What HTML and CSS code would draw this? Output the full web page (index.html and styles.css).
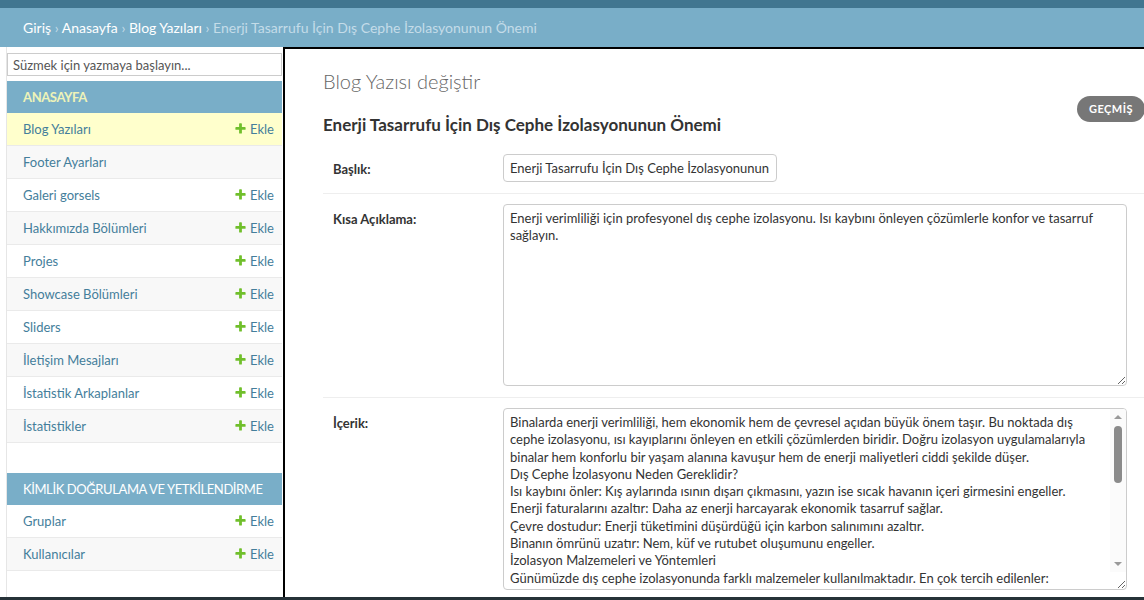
FILE: index.html
```html
<!DOCTYPE html>
<html lang="tr">
<head>
<meta charset="utf-8">
<title>Blog Yazısı değiştir</title>
<link rel="stylesheet" href="styles.css">
</head>
<body>
<div class="topbar"></div>
<nav class="breadcrumbs"><a href="#">Giriş</a> › <a href="#">Anasayfa</a> › <a href="#">Blog Yazıları</a> › Enerji Tasarrufu İçin Dış Cephe İzolasyonunun Önemi</nav>
<div class="main">
  <div class="toggle"></div>
  <aside class="sidebar">
    <input class="filter" type="search" placeholder="Süzmek için yazmaya başlayın...">
    <div class="module current-app">
      <div class="caption">Anasayfa</div>
      <div class="row current-model"><a href="#">Blog Yazıları</a><a class="add" href="#"><svg viewBox="0 0 1792 1792"><path d="M1600 796v192q0 40-28 68t-68 28h-416v416q0 40-28 68t-68 28h-192q-40 0-68-28t-28-68v-416h-416q-40 0-68-28t-28-68v-192q0-40 28-68t68-28h416v-416q0-40 28-68t68-28h192q40 0 68 28t28 68v416h416q40 0 68 28t28 68z"/></svg>Ekle</a></div>
      <div class="row"><a href="#">Footer Ayarları</a></div>
      <div class="row"><a href="#">Galeri gorsels</a><a class="add" href="#"><svg viewBox="0 0 1792 1792"><path d="M1600 796v192q0 40-28 68t-68 28h-416v416q0 40-28 68t-68 28h-192q-40 0-68-28t-28-68v-416h-416q-40 0-68-28t-28-68v-192q0-40 28-68t68-28h416v-416q0-40 28-68t68-28h192q40 0 68 28t28 68v416h416q40 0 68 28t28 68z"/></svg>Ekle</a></div>
      <div class="row"><a href="#">Hakkımızda Bölümleri</a><a class="add" href="#"><svg viewBox="0 0 1792 1792"><path d="M1600 796v192q0 40-28 68t-68 28h-416v416q0 40-28 68t-68 28h-192q-40 0-68-28t-28-68v-416h-416q-40 0-68-28t-28-68v-192q0-40 28-68t68-28h416v-416q0-40 28-68t68-28h192q40 0 68 28t28 68v416h416q40 0 68 28t28 68z"/></svg>Ekle</a></div>
      <div class="row"><a href="#">Projes</a><a class="add" href="#"><svg viewBox="0 0 1792 1792"><path d="M1600 796v192q0 40-28 68t-68 28h-416v416q0 40-28 68t-68 28h-192q-40 0-68-28t-28-68v-416h-416q-40 0-68-28t-28-68v-192q0-40 28-68t68-28h416v-416q0-40 28-68t68-28h192q40 0 68 28t28 68v416h416q40 0 68 28t28 68z"/></svg>Ekle</a></div>
      <div class="row"><a href="#">Showcase Bölümleri</a><a class="add" href="#"><svg viewBox="0 0 1792 1792"><path d="M1600 796v192q0 40-28 68t-68 28h-416v416q0 40-28 68t-68 28h-192q-40 0-68-28t-28-68v-416h-416q-40 0-68-28t-28-68v-192q0-40 28-68t68-28h416v-416q0-40 28-68t68-28h192q40 0 68 28t28 68v416h416q40 0 68 28t28 68z"/></svg>Ekle</a></div>
      <div class="row"><a href="#">Sliders</a><a class="add" href="#"><svg viewBox="0 0 1792 1792"><path d="M1600 796v192q0 40-28 68t-68 28h-416v416q0 40-28 68t-68 28h-192q-40 0-68-28t-28-68v-416h-416q-40 0-68-28t-28-68v-192q0-40 28-68t68-28h416v-416q0-40 28-68t68-28h192q40 0 68 28t28 68v416h416q40 0 68 28t28 68z"/></svg>Ekle</a></div>
      <div class="row"><a href="#">İletişim Mesajları</a><a class="add" href="#"><svg viewBox="0 0 1792 1792"><path d="M1600 796v192q0 40-28 68t-68 28h-416v416q0 40-28 68t-68 28h-192q-40 0-68-28t-28-68v-416h-416q-40 0-68-28t-28-68v-192q0-40 28-68t68-28h416v-416q0-40 28-68t68-28h192q40 0 68 28t28 68v416h416q40 0 68 28t28 68z"/></svg>Ekle</a></div>
      <div class="row"><a href="#">İstatistik Arkaplanlar</a><a class="add" href="#"><svg viewBox="0 0 1792 1792"><path d="M1600 796v192q0 40-28 68t-68 28h-416v416q0 40-28 68t-68 28h-192q-40 0-68-28t-28-68v-416h-416q-40 0-68-28t-28-68v-192q0-40 28-68t68-28h416v-416q0-40 28-68t68-28h192q40 0 68 28t28 68v416h416q40 0 68 28t28 68z"/></svg>Ekle</a></div>
      <div class="row"><a href="#">İstatistikler</a><a class="add" href="#"><svg viewBox="0 0 1792 1792"><path d="M1600 796v192q0 40-28 68t-68 28h-416v416q0 40-28 68t-68 28h-192q-40 0-68-28t-28-68v-416h-416q-40 0-68-28t-28-68v-192q0-40 28-68t68-28h416v-416q0-40 28-68t68-28h192q40 0 68 28t28 68v416h416q40 0 68 28t28 68z"/></svg>Ekle</a></div>
    </div>
    <div class="module">
      <div class="caption">Kimlik Doğrulama ve Yetkilendirme</div>
      <div class="row"><a href="#">Gruplar</a><a class="add" href="#"><svg viewBox="0 0 1792 1792"><path d="M1600 796v192q0 40-28 68t-68 28h-416v416q0 40-28 68t-68 28h-192q-40 0-68-28t-28-68v-416h-416q-40 0-68-28t-28-68v-192q0-40 28-68t68-28h416v-416q0-40 28-68t68-28h192q40 0 68 28t28 68v416h416q40 0 68 28t28 68z"/></svg>Ekle</a></div>
      <div class="row"><a href="#">Kullanıcılar</a><a class="add" href="#"><svg viewBox="0 0 1792 1792"><path d="M1600 796v192q0 40-28 68t-68 28h-416v416q0 40-28 68t-68 28h-192q-40 0-68-28t-28-68v-416h-416q-40 0-68-28t-28-68v-192q0-40 28-68t68-28h416v-416q0-40 28-68t68-28h192q40 0 68 28t28 68v416h416q40 0 68 28t28 68z"/></svg>Ekle</a></div>
    </div>
  </aside>
  <div class="content">
    <h1>Blog Yazısı değiştir</h1>
    <ul class="object-tools"><li><a href="#">Geçmiş</a></li></ul>
    <h2>Enerji Tasarrufu İçin Dış Cephe İzolasyonunun Önemi</h2>
    <form class="change-form">
      <div class="form-row">
        <label for="id_baslik">Başlık:</label>
        <input id="id_baslik" class="vTextField" type="text" value="Enerji Tasarrufu İçin Dış Cephe İzolasyonunun Önemi">
      </div>
      <div class="form-row">
        <label for="id_kisa">Kısa Açıklama:</label>
        <textarea id="id_kisa" class="vLargeTextField short">Enerji verimliliği için profesyonel dış cephe izolasyonu. Isı kaybını önleyen çözümlerle konfor ve tasarruf sağlayın.</textarea>
      </div>
      <div class="form-row">
        <label for="id_icerik">İçerik:</label>
        <div class="ta-wrap">
          <textarea id="id_icerik" class="vLargeTextField tall">Binalarda enerji verimliliği, hem ekonomik hem de çevresel açıdan büyük önem taşır. Bu noktada dış
cephe izolasyonu, ısı kayıplarını önleyen en etkili çözümlerden biridir. Doğru izolasyon uygulamalarıyla
binalar hem konforlu bir yaşam alanına kavuşur hem de enerji maliyetleri ciddi şekilde düşer.
Dış Cephe İzolasyonu Neden Gereklidir?
Isı kaybını önler: Kış aylarında ısının dışarı çıkmasını, yazın ise sıcak havanın içeri girmesini engeller.
Enerji faturalarını azaltır: Daha az enerji harcayarak ekonomik tasarruf sağlar.
Çevre dostudur: Enerji tüketimini düşürdüğü için karbon salınımını azaltır.
Binanın ömrünü uzatır: Nem, küf ve rutubet oluşumunu engeller.
İzolasyon Malzemeleri ve Yöntemleri
Günümüzde dış cephe izolasyonunda farklı malzemeler kullanılmaktadır. En çok tercih edilenler:
EPS Levhalar: Ekonomik ve hafif yapısıyla en yaygın kullanılan malzemedir.
XPS Levhalar: Neme karşı dayanıklıdır ve yüksek basınç mukavemetine sahiptir.
Taşyünü: Yanmaz yapısı sayesinde yangın güvenliği ve ses yalıtımı sağlar.
Cam Yünü: Hafif ve esnek yapısıyla farklı yüzeylere kolayca uygulanabilir.
Doğru Uygulamanın Önemi
İzolasyonun verimli olması için malzeme seçimi kadar uygulama kalitesi de önemlidir.
Sonuç
Dış cephe izolasyonu, hem bütçenize hem de çevreye katkı sağlayan uzun vadeli bir yatırımdır.</textarea>
          <div class="fake-scroll" aria-hidden="true">
            <span class="arrow-up"></span>
            <span class="thumb"></span>
            <span class="spacer"></span>
            <span class="arrow-down"></span>
          </div>
        </div>
      </div>
    </form>
  </div>
</div>
<div class="taskbar"></div>
</body>
</html>
```

FILE: styles.css
```css
* { box-sizing: border-box; }
html, body { margin: 0; padding: 0; }
body {
  width: 1144px;
  height: 600px;
  overflow: hidden;
  font-family: Lato, "Liberation Sans", sans-serif;
  font-size: 13px;
  color: #333;
  background: #fff;
}
a { text-decoration: none; color: #447e9b; }

.topbar { height: 8px; background: #417690; }

.breadcrumbs {
  height: 39px;
  padding: 10px 23px;
  background: #79aec8;
  color: #c4dce8;
  font-size: 14px;
  line-height: 19px;
  white-space: nowrap;
}
.breadcrumbs a { color: #fff; }

.main { display: flex; height: 553px; overflow: hidden; }

.toggle { flex: 0 0 7px; min-width: 0; border-right: 1px solid #e6e6e6; }

.sidebar {
  flex: 0 0 276px;
  min-width: 0;
  overflow: hidden;
  border-right: 1px solid #fff;
}
.filter {
  display: block;
  width: 100%;
  height: 23px;
  margin: 6px 0 5px;
  padding: 2px 5px;
  border: 1px solid #ccc;
  background: #fff;
  font: 13px Lato, "Liberation Sans", sans-serif;
  color: #333;
  outline: none;
}
.filter::placeholder { color: #555; }

.module { margin-bottom: 30px; }
.caption {
  height: 32px;
  padding: 0 16px;
  line-height: 32px;
  background: #79aec8;
  color: #fff;
  letter-spacing: -0.4px;
  text-transform: uppercase;
  white-space: nowrap;
}
.current-app .caption { color: #eef3b8; font-weight: bold; }

.row {
  display: flex;
  align-items: center;
  justify-content: space-between;
  height: 33px;
  padding: 0 8px 0 16px;
  border-bottom: 1px solid #eaeaea;
  background: #fff;
}
.row:nth-child(odd) { background: #f8f8f8; }
.row.current-model { background: #ffc; }
.add { display: flex; align-items: center; }
.add svg { width: 13px; height: 13px; fill: #70bf2b; margin-right: 3px; margin-top: -2px; }

.content {
  flex: 0 0 862px;
  min-width: 0;
  border-left: 2px solid #000;
  border-top: 2px solid #000;
  padding: 20px 0 0 38px;
}
h1 {
  margin: 0;
  font-size: 20px;
  line-height: 24px;
  font-weight: 300;
  color: #666;
}
.object-tools {
  float: right;
  margin: 3px 0 0;
  padding: 0;
  list-style: none;
}
.object-tools a {
  display: block;
  height: 26px;
  padding: 3px 12px;
  line-height: 20px;
  border-radius: 15px;
  background: #777;
  color: #fff;
  font-size: 11px;
  font-weight: bold;
  letter-spacing: 0.5px;
  text-transform: uppercase;
}
h2 {
  margin: 22px 0 9px;
  font-size: 17px;
  line-height: 20px;
  font-weight: bold;
  color: #333;
}
.change-form { clear: both; }
.form-row {
  display: flex;
  align-items: flex-start;
  padding: 10px 10px 11px;
  border-bottom: 1px solid #eee;
}
.form-row label {
  flex: 0 0 170px;
  padding-top: 7px;
  line-height: 16px;
  font-weight: bold;
  color: #333;
}
.vTextField {
  width: 274px;
  height: 28px;
  padding: 5px 6px;
  border: 1px solid #ccc;
  border-radius: 4px;
  font: 13px Lato, "Liberation Sans", sans-serif;
  color: #333;
}
.vLargeTextField {
  display: block;
  width: 624px;
  padding: 5px 6px;
  border: 1px solid #ccc;
  border-radius: 4px;
  font: 13px/17.3px Lato, "Liberation Sans", sans-serif;
  color: #333;
  resize: vertical;
}
.short { height: 182px; }

.ta-wrap { position: relative; }
.tall {
  height: 182px;
  padding-right: 22px;
  overflow: hidden;
  white-space: pre-wrap;
}
.fake-scroll {
  position: absolute;
  top: 1px;
  right: 1px;
  bottom: 18px;
  width: 16px;
  display: flex;
  flex-direction: column;
  align-items: center;
  background: #fbfbfb;
  border-top-right-radius: 3px;
}
.arrow-up, .arrow-down {
  flex: 0 0 auto;
  width: 0;
  height: 0;
  border-left: 4px solid transparent;
  border-right: 4px solid transparent;
}
.arrow-up { margin-top: 6px; border-bottom: 4px solid #9a9a9a; }
.arrow-down { margin-bottom: 6px; border-top: 4px solid #9a9a9a; }
.thumb {
  flex: 0 0 57px;
  width: 8px;
  margin-top: 7px;
  border-radius: 4px;
  background: #8b8b8b;
}
.spacer { flex: 1 1 auto; }

.taskbar {
  position: fixed;
  left: 0;
  right: 0;
  bottom: 0;
  height: 3px;
  background: #263238;
}
```
